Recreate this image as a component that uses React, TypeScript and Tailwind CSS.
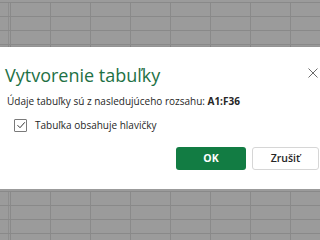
import React from "react";

function GridArea({ height, offset }: { height: number; offset: number }) {
  const rows = Array.from({ length: 5 });
  const cols = Array.from({ length: 8 });
  return (
    <div className="relative w-full overflow-hidden bg-[#9b9b9b]" style={{ height }}>
      <div className="flex flex-col" style={{ marginTop: offset }}>
        {rows.map((_, r) => (
          <div key={r} className="flex h-[14px] shrink-0 border-t border-[#898989]">
            <div className="w-[9px] shrink-0 border-r border-[#8e8e8e]" />
            <div className="w-[1px] shrink-0" />
            {cols.map((_, c) => (
              <div key={c} className="w-[40px] shrink-0 border-l border-[#8a8a8a]" />
            ))}
          </div>
        ))}
      </div>
    </div>
  );
}

export default function App() {
  return (
    <div
      className="flex h-[240px] w-[320px] flex-col overflow-hidden bg-[#9b9b9b]"
      style={{ fontFamily: '"Open Sans", "Noto Sans", sans-serif' }}
    >
      <GridArea height={47} offset={2} />
      <div className="relative flex h-[142px] shrink-0 flex-col bg-white shadow-[0_1px_3px_rgba(0,0,0,0.25)]">
        <div className="flex items-start justify-between pl-[5px] pr-[2px] pt-[17px]">
          <h1 className="text-[18px] font-medium leading-[22px] text-[#1e7145]">
            Vytvorenie tabuľky
          </h1>
          <svg width="10" height="10" viewBox="0 0 10 10" className="mt-[4px]">
            <path d="M0.5 0.5 L9.5 9.5 M9.5 0.5 L0.5 9.5" stroke="#6b6b6b" strokeWidth="1" fill="none" />
          </svg>
        </div>
        <p className="mt-[8px] pl-[7px] text-[10px] leading-[14px] text-[#262626]">
          Údaje tabuľky sú z nasledujúceho rozsahu: <span className="font-bold">A1:F36</span>
        </p>
        <label className="mt-[10px] flex items-center gap-[8px] pl-[14px]">
          <span className="flex h-[13px] w-[13px] items-center justify-center rounded-[1px] border border-[#7a7a7a] bg-white">
            <svg width="10" height="10" viewBox="0 0 10 10">
              <path d="M1.5 5.2 L4 7.7 L8.8 2.3" stroke="#333" strokeWidth="1" fill="none" />
            </svg>
          </span>
          <span className="text-[10px] leading-[14px] text-[#262626]">Tabuľka obsahuje hlavičky</span>
        </label>
        <div className="mt-[15px] flex justify-end gap-[6px] pr-[1px]">
          <button className="flex h-[23px] w-[70px] items-center justify-center rounded-[3px] bg-[#127c43] text-[10.5px] font-bold text-white">
            OK
          </button>
          <button className="flex h-[23px] w-[67px] items-center justify-center rounded-[3px] border border-[#d6d6d6] bg-white text-[10.5px] font-semibold text-[#262626]">
            Zrušiť
          </button>
        </div>
      </div>
      <GridArea height={51} offset={2} />
    </div>
  );
}
